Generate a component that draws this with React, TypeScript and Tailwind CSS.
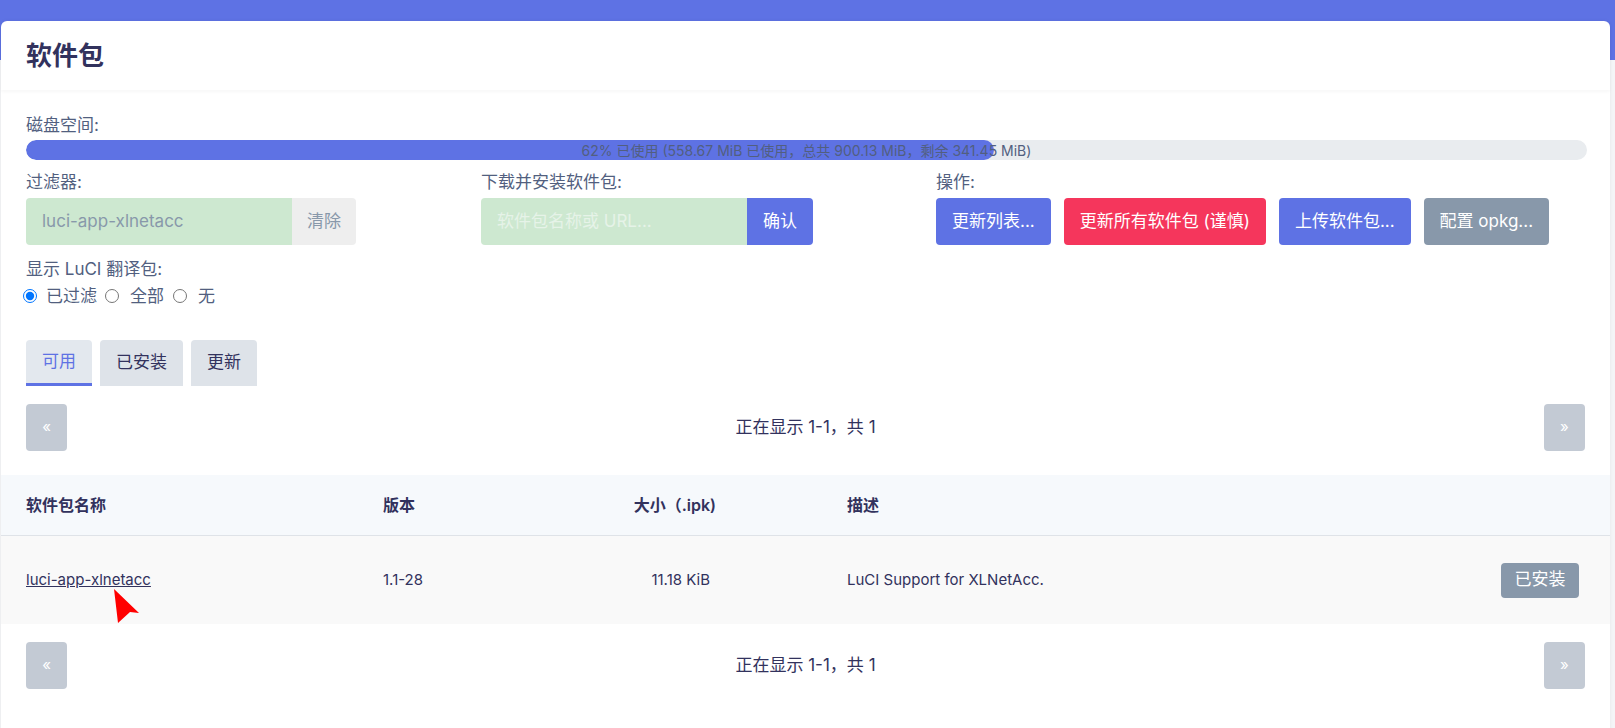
import React from "react";

const FONT = "font-['Inter','Noto_Sans_CJK_SC',sans-serif]";

function Pager() {
  return (
    <div className="flex items-center justify-between px-[25px]">
      <button className="w-[41px] h-[47px] rounded-[4px] bg-[#c3cad4] text-white text-[15px]">«</button>
      <span className="text-[17px] text-[#32325d]">正在显示 1-1，共 1</span>
      <button className="w-[41px] h-[47px] rounded-[4px] bg-[#c3cad4] text-white text-[15px]">»</button>
    </div>
  );
}

function ActionButton({ label, color }: { label: string; color: string }) {
  return (
    <button className={`h-[47px] px-[16px] rounded-[4px] text-white text-[17px] ${color}`}>
      {label}
    </button>
  );
}

export default function App() {
  return (
    <div className={`min-h-screen bg-[linear-gradient(#5e72e4_60px,#f4f5f7_60px)] pt-[21px] pl-[1px] ${FONT}`}>
      <div className="w-[1609px] bg-white rounded-t-[6px] shadow-[0_0_4px_rgba(0,0,0,0.06)] pb-[60px]">
        {/* header */}
        <div className="h-[69px] flex items-center px-[25px] shadow-[0_2px_3px_rgba(0,0,0,0.03)]">
          <h2 className="text-[26px] font-bold text-[#32325d]">软件包</h2>
        </div>

        <div className="px-[25px] pt-[25px]">
          <div className="text-[17px] leading-[20px] text-[#525f7f]">磁盘空间:</div>
          <div className="relative mt-[5px] h-[20px] w-[1561px] rounded-full bg-[#e9ecef] overflow-hidden">
            <div className="h-full rounded-full bg-[#5e72e4]" style={{ width: "62%" }} />
            <div className="absolute inset-0 flex items-center justify-center text-[14px] text-[#525f7f]">
              62% 已使用 (558.67 MiB 已使用，总共 900.13 MiB，剩余 341.45 MiB)
            </div>
          </div>

          <div className="flex mt-[12px]">
            <div className="w-[455px]">
              <div className="text-[17px] leading-[20px] text-[#525f7f]">过滤器:</div>
              <div className="flex mt-[6px] h-[47px]">
                <div className="w-[266px] rounded-l-[4px] bg-[#cde8d0] flex items-center pl-[16px] text-[17px] text-[#8898aa]">
                  luci-app-xlnetacc
                </div>
                <div className="w-[64px] rounded-r-[4px] bg-[#eeeeee] flex items-center justify-center text-[17px] text-[#8898aa]">
                  清除
                </div>
              </div>
            </div>
            <div className="w-[455px]">
              <div className="text-[17px] leading-[20px] text-[#525f7f]">下载并安装软件包:</div>
              <div className="flex mt-[6px] h-[47px]">
                <div className="w-[266px] rounded-l-[4px] bg-[#cde8d0] flex items-center pl-[16px] text-[17px] text-[#e6f3e8]">
                  软件包名称或 URL...
                </div>
                <div className="w-[66px] rounded-r-[4px] bg-[#5e72e4] flex items-center justify-center text-[17px] text-white">
                  确认
                </div>
              </div>
            </div>
            <div>
              <div className="text-[17px] leading-[20px] text-[#525f7f]">操作:</div>
              <div className="flex gap-[13px] mt-[6px]">
                <ActionButton label="更新列表..." color="bg-[#5e72e4]" />
                <ActionButton label="更新所有软件包 (谨慎)" color="bg-[#f5365c]" />
                <ActionButton label="上传软件包..." color="bg-[#5e72e4]" />
                <ActionButton label="配置 opkg..." color="bg-[#8898aa]" />
              </div>
            </div>
          </div>

          <div className="mt-[14px] text-[17px] leading-[20px] text-[#525f7f]">显示 LuCI 翻译包:</div>
          <div className="mt-[7px] flex items-center text-[17px] leading-[20px] text-[#525f7f]">
            <input type="radio" name="tr" defaultChecked className="m-0 ml-[-3px] w-[14px] h-[14px]" />
            <span className="ml-[9px]">已过滤</span>
            <input type="radio" name="tr" className="m-0 ml-[8px] w-[14px] h-[14px]" />
            <span className="ml-[11px]">全部</span>
            <input type="radio" name="tr" className="m-0 ml-[9px] w-[14px] h-[14px]" />
            <span className="ml-[11px]">无</span>
          </div>

          <div className="flex gap-[8px] mt-[34px]">
            <div className="h-[46px] px-[16px] flex items-center rounded-t-[4px] bg-[#e3e8ee] border-b-[3px] border-[#5e72e4] text-[17px] text-[#5e72e4]">
              可用
            </div>
            <div className="h-[46px] px-[16px] flex items-center rounded-t-[4px] bg-[#dee3e9] text-[17px] text-[#32325d]">
              已安装
            </div>
            <div className="h-[46px] px-[16px] flex items-center rounded-t-[4px] bg-[#dee3e9] text-[17px] text-[#32325d]">
              更新
            </div>
          </div>
        </div>

        <div className="mt-[18px]">
          <Pager />
        </div>

        {/* table */}
        <div className="mt-[24px]">
          <div className="flex items-center h-[61px] bg-[#f6f9fc] border-b border-[#dfe3e8] px-[25px] text-[16px] font-semibold text-[#32325d]">
            <div className="w-[357px]">软件包名称</div>
            <div className="w-[217px]">版本</div>
            <div className="w-[116px] text-right">大小（.ipk)</div>
            <div className="w-[131px]" />
            <div className="flex-1">描述</div>
          </div>
          <div className="relative flex items-center h-[88px] bg-[#f9f9f9] pl-[25px] pr-[31px] text-[15px] text-[#32325d]">
            <div className="w-[357px]">
              <span className="underline">luci-app-xlnetacc</span>
            </div>
            <div className="w-[217px]">1.1-28</div>
            <div className="w-[116px] text-right pr-[6px]">11.18 KiB</div>
            <div className="w-[131px]" />
            <div className="flex-1">LuCI Support for XLNetAcc.</div>
            <button className="h-[35px] w-[78px] rounded-[4px] bg-[#8898aa] text-white text-[17px]">已安装</button>
            <svg className="absolute left-[112px] top-[53px]" width="28" height="34" viewBox="0 0 28 34">
              <polygon points="1,0 26,24 17,23 5,34" fill="#ff0000" />
            </svg>
          </div>
        </div>

        <div className="mt-[18px]">
          <Pager />
        </div>
      </div>
    </div>
  );
}
